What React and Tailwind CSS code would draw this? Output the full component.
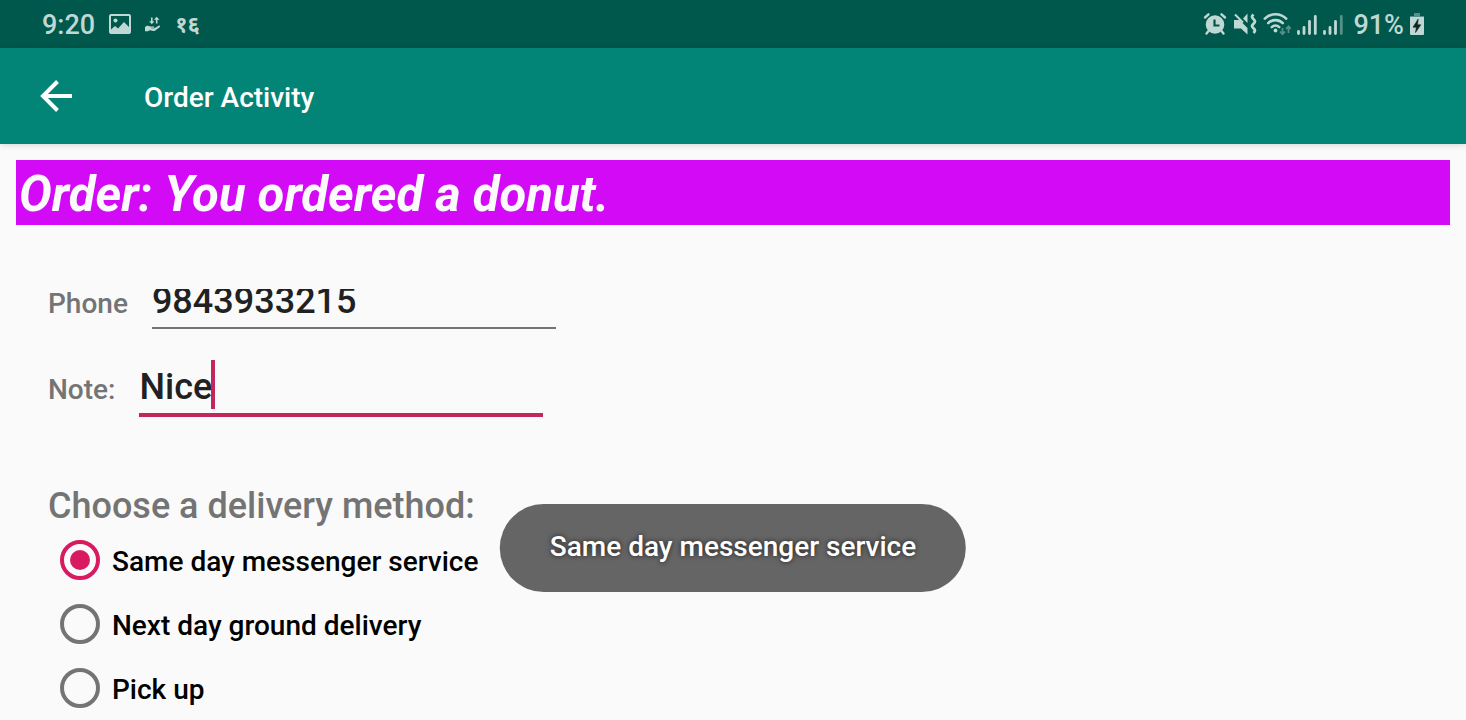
import { useState } from "react";

const METHODS = ["Same day messenger service", "Next day ground delivery", "Pick up"];

function PictureIcon() {
  return (
    <svg className="h-5 w-[22px]" viewBox="0 0 22 20" fill="none">
      <rect x="1" y="1" width="20" height="18" rx="1" stroke="currentColor" strokeWidth="2" />
      <circle cx="6.5" cy="6.5" r="2" fill="currentColor" />
      <path d="M2 15.500l4-3.500 3 2.500 6-6.500 6 6V18H2z" fill="currentColor" />
    </svg>
  );
}

function TransferIcon() {
  return (
    <svg className="h-4 w-4" viewBox="0 0 16 16" fill="currentColor">
      <path d="M6 1.500h1.600v3.800h1.800L6.800 8.300 4.200 5.300H6zM11.700.800l2.800 3h-2v3.700h-1.600V3.800H8.900z" />
      <path d="M0 11c2-1.700 3.600-1.500 5-.5h3.600c1 0 1 1.300 0 1.300H6v.5h3.400l4.200-2.600c1.300-.5 2.100.6 1 1.600L10.300 14.500c-1 .7-2 .6-3 .3-1.500-.5-3-.8-4.200.4H0z" />
    </svg>
  );
}

function AlarmIcon() {
  return (
    <svg className="h-6 w-6" viewBox="0 0 24 24">
      <circle cx="12" cy="12.500" r="9.300" fill="currentColor" />
      <path d="M2 5.500l3.500-3.200M22 5.500l-3.500-3.200M5.500 19L3.500 21.500M18.500 19l2 2.500" stroke="currentColor" strokeWidth="2.400" strokeLinecap="round" />
      <path d="M11.500 7.500v6H16.500" stroke="#00574b" strokeWidth="2.200" fill="none" />
    </svg>
  );
}

function MuteVibrateIcon() {
  return (
    <svg className="h-6 w-6" viewBox="0 0 24 24" fill="none">
      <path d="M1 8h5.500L14.500 16V22.500L8 16.500H1zM14.500 1.500V11L10 6.500z" fill="currentColor" />
      <path d="M2 2.500l8 8" stroke="currentColor" strokeWidth="2" />
      <path d="M20.500 2.500c-2 2-2 2.500 0 4.600s2 2.500 0 4.600-2 2.500 0 4.600 2 2.500 0 4.700" stroke="currentColor" strokeWidth="2.800" />
    </svg>
  );
}

function WifiIcon() {
  return (
    <svg className="h-6 w-7" viewBox="0 0 28 24" fill="none">
      <path d="M1.800 6.700a15.200 15.200 0 0 1 21.400 0M5.200 11.100a10.400 10.400 0 0 1 14.600 0M8.800 15.100a5.300 5.300 0 0 1 7.400 0" stroke="currentColor" strokeWidth="2.600" strokeLinecap="round" />
      <circle cx="12.500" cy="18.500" r="1.900" fill="currentColor" />
      <path d="M19.500 16v6M17 19.500l2.500 2.700 2.500-2.700M25.500 21v-6.500M23 17l2.500-2.700L28 17" stroke="currentColor" strokeWidth="1.800" opacity=".45" />
    </svg>
  );
}

function SignalIcon({ weak }) {
  return (
    <svg className="h-5 w-5" viewBox="0 0 20 20" stroke="currentColor" strokeWidth="2.800" strokeLinecap="round">
      <path d="M1.500 16.500v2M7 12.500v6M12.500 6.500v12" />
      <path d="M18.300 1.500v17" opacity={weak ? 0.45 : 1} />
    </svg>
  );
}

function BatteryIcon() {
  return (
    <svg className="h-[22px] w-[14px]" viewBox="0 0 14 22">
      <path d="M4 0h6v3h4v2H0V3h4z" fill="currentColor" opacity=".45" />
      <path d="M0 4h14v17a1 1 0 0 1-1 1H1a1 1 0 0 1-1-1z" fill="currentColor" />
      <path d="M8.200 6L3 14.200h3.400L5.500 19.500l5.300-7.700H7.500z" fill="#10231f" stroke="#10231f" strokeWidth=".6" />
    </svg>
  );
}

export default function App() {
  const [method, setMethod] = useState(METHODS[0]);
  return (
    <div className="relative min-h-screen overflow-hidden bg-[#fafafa] font-['Roboto','Noto_Sans',sans-serif] font-medium text-[#747474]">
      <div className="flex h-12 items-center justify-between bg-[#00574b] px-[42px] pt-0.5 text-[#bfd8d4]">
        <div className="flex items-center">
          <span className="text-[27px]">9:20</span>
          <span className="ml-3.5 pb-0.5"><PictureIcon /></span>
          <span className="ml-3.5 pb-0.5"><TransferIcon /></span>
          <span className="ml-3.5 pb-0.5 text-[22px] font-bold">१६</span>
        </div>
        <div className="flex items-center">
          <span className="pb-0.5"><AlarmIcon /></span>
          <span className="ml-1.5 pb-0.5"><MuteVibrateIcon /></span>
          <span className="ml-1.5 pb-0.5"><WifiIcon /></span>
          <span className="ml-1.5"><SignalIcon /></span>
          <span className="ml-1.5"><SignalIcon weak /></span>
          <span className="ml-2.5 text-[27px]">91%</span>
          <span className="ml-1.5 pb-0.5"><BatteryIcon /></span>
        </div>
      </div>

      <header className="relative flex h-24 items-center bg-[#028577] pl-10 text-white shadow-[0_1px_6px_rgba(0,0,0,0.15)]">
        <button type="button" aria-label="Back" className="block">
          <svg className="size-8" viewBox="0 0 32 32" fill="none" stroke="currentColor" strokeWidth="4">
            <path d="M32 16H3M17.500 1.500L3 16l14.500 14.500" />
          </svg>
        </button>
        <h1 className="ml-18 pt-1 text-[28px] leading-8">Order Activity</h1>
      </header>

      <main className="px-4 pt-4">
        <h2 className="bg-[#d20af5] px-[3px] pt-1 text-[49px] leading-[61px] font-bold text-[#fafafa] italic">
          Order: You ordered a donut.
        </h2>

        <form className="px-8 pt-[63px]">
          <div className="flex items-start gap-6">
            <label htmlFor="phone" className="text-[28px] leading-8">Phone</label>
            <div className="mt-px flex h-10 items-end overflow-hidden">
              <input
                id="phone"
                type="tel"
                defaultValue="9843933215"
                className="h-[50px] w-[404px] shrink-0 border-b-2 border-[#747474] bg-transparent pb-1 text-4xl leading-[42px] text-[#212121] outline-none"
              />
            </div>
          </div>

          <div className="mt-7 flex items-start gap-6">
            <label htmlFor="note" className="mt-[17px] text-[28px] leading-8">Note:</label>
            <div className="relative">
              <input
                id="note"
                type="text"
                defaultValue="Nice"
                className="block h-[60px] w-[404px] border-b-4 border-[#c2265f] bg-transparent pt-1 text-4xl leading-[42px] text-[#212121] outline-none"
              />
              <span className="absolute top-[3px] left-[72px] h-[49px] w-1 bg-[#c2265f]" />
            </div>
          </div>

          <fieldset className="mt-[67px]">
            <legend className="text-4xl leading-[44px]">Choose a delivery method:</legend>
            {METHODS.map((name) => (
              <label key={name} className="flex h-16 items-center gap-3 pl-3 text-[28px] leading-8 text-black">
                <input
                  type="radio"
                  name="method"
                  checked={method === name}
                  onChange={() => setMethod(name)}
                  className="size-10 appearance-none rounded-full border-4 border-[#747474] bg-clip-content p-1.5 checked:border-[#d81b60] checked:bg-[#d81b60]"
                />
                <span className="pt-1">{name}</span>
              </label>
            ))}
          </fieldset>
        </form>
      </main>

      <div
        role="status"
        className="absolute bottom-32 left-1/2 flex h-22 -translate-x-1/2 items-center rounded-full bg-[#656565] px-[50px] pb-0.5 text-[28px] leading-8 whitespace-nowrap text-white [text-shadow:0_0_5px_rgba(0,0,0,0.7)]"
      >
        {METHODS[0]}
      </div>
    </div>
  );
}
